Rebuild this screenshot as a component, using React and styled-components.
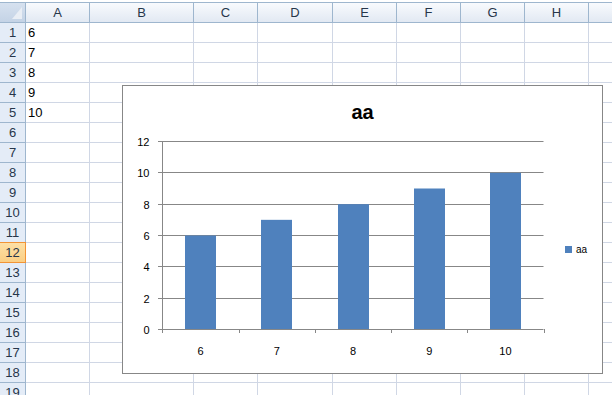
import React from 'react';
import styled, { createGlobalStyle } from 'styled-components';

const GlobalStyle = createGlobalStyle`
  html, body {
    margin: 0;
    padding: 0;
    background: #ffffff;
    overflow: hidden;
  }
  body {
    font-family: "Liberation Sans", Arial, sans-serif;
  }
`;

const COLUMNS = [
  { name: '', width: 26 },
  { name: 'A', width: 64 },
  { name: 'B', width: 104 },
  { name: 'C', width: 64 },
  { name: 'D', width: 75 },
  { name: 'E', width: 64 },
  { name: 'F', width: 64 },
  { name: 'G', width: 64 },
  { name: 'H', width: 64 },
  { name: 'I', width: 64 },
];

const VALUES = [6, 7, 8, 9, 10];
const ROW_COUNT = 19;
const SELECTED_ROW = 12;

const Page = styled.div`
  position: relative;
  width: 612px;
  height: 395px;
  padding-top: 2px;
  box-sizing: border-box;
  overflow: hidden;
`;

const Sheet = styled.div`
  display: grid;
  grid-template-columns: ${(p) => p.$columns};
  grid-auto-rows: 20px;
  border-top: 1px solid #9eb6ce;
  font-size: 13px;
  line-height: 19px;
`;

const Corner = styled.div`
  position: relative;
  box-sizing: border-box;
  background: linear-gradient(#d6e1ef, #c4d3e6);
  border-right: 1px solid #9eb6ce;
  border-bottom: 1px solid #9eb6ce;

  &::after {
    content: '';
    position: absolute;
    right: 3px;
    bottom: 3px;
    width: 10px;
    height: 12px;
    background: #e9eef5;
    clip-path: polygon(100% 0, 100% 100%, 0 100%);
  }
`;

const ColHeader = styled.div`
  box-sizing: border-box;
  background: linear-gradient(#f8fafd, #e2e9f3);
  border-right: 1px solid #9eb6ce;
  border-bottom: 1px solid #9eb6ce;
  text-align: center;
  color: #27364a;
`;

const RowHeader = styled.div`
  box-sizing: border-box;
  background: ${(p) => (p.$selected ? 'linear-gradient(#fde0a6, #fbcf84)' : '#e4ecf7')};
  border-right: 1px solid ${(p) => (p.$selected ? '#f29436' : '#9eb6ce')};
  border-bottom: 1px solid ${(p) => (p.$selected ? '#f29436' : '#9eb6ce')};
  box-shadow: ${(p) => (p.$selected ? '0 -1px 0 #f29436' : 'none')};
  text-align: center;
  color: #27364a;
`;

const Cell = styled.div`
  box-sizing: border-box;
  border-right: 1px solid #d0d7e5;
  border-bottom: 1px solid #d0d7e5;
  padding-left: 2px;
  color: #000000;
  white-space: nowrap;
  overflow: hidden;
`;

const ChartFrame = styled.div`
  position: absolute;
  left: 122px;
  top: 85px;
  width: 481px;
  height: 289px;
  box-sizing: border-box;
  border: 1px solid #878787;
  background: #ffffff;
  display: grid;
  grid-template-rows: 40px 1fr;
`;

const ChartTitle = styled.div`
  padding-top: 14px;
  text-align: center;
  font-weight: bold;
  font-size: 20px;
  line-height: 24px;
  color: #000000;
`;

const ChartBody = styled.div`
  display: flex;
  align-items: center;
`;

const Legend = styled.div`
  display: flex;
  align-items: center;
  gap: 4px;
  padding-left: 8px;
  font-size: 10px;
  line-height: 12px;
`;

const Swatch = styled.span`
  width: 7px;
  height: 7px;
  background: ${(p) => p.$color};
`;

const BAR_COLOR = '#4f81bd';
const AXIS_COLOR = '#878787';

function Plot() {
  const left = 162.5;
  const right = 543.5;
  const zeroY = 329.5;
  const step = 188 / 12;
  const catWidth = (right - left) / VALUES.length;
  const yFor = (v) => Math.round(zeroY - v * step - 0.5) + 0.5;
  const ticks = [0, 2, 4, 6, 8, 10, 12];

  return (
    <svg width="434" height="247" viewBox="123 126 434 247">
      {ticks.map((t) => (
        <g key={t}>
          <line x1={158} x2={right} y1={yFor(t)} y2={yFor(t)} stroke={AXIS_COLOR} strokeWidth="1" />
          <text
            x={149.5}
            y={yFor(t) + 4}
            textAnchor="end"
            fontSize="11"
            fontFamily="Liberation Sans, Arial, sans-serif"
            fill="#000"
          >
            {t}
          </text>
        </g>
      ))}
      {VALUES.map((v, i) => {
        const cx = left + catWidth * (i + 0.5);
        const top = zeroY - v * step;
        return (
          <rect key={v} x={Math.round(cx - 15.5)} y={top} width={31} height={329 - top} fill={BAR_COLOR} />
        );
      })}
      <line x1={left} x2={left} y1={141} y2={333} stroke={AXIS_COLOR} strokeWidth="1" />
      {VALUES.map((v, i) => (
        <line
          key={`t${v}`}
          x1={Math.round(left + catWidth * (i + 1)) + 0.5}
          x2={Math.round(left + catWidth * (i + 1)) + 0.5}
          y1={329}
          y2={333}
          stroke={AXIS_COLOR}
          strokeWidth="1"
        />
      ))}
      {VALUES.map((v, i) => (
        <text
          key={`l${v}`}
          x={left + catWidth * (i + 0.5)}
          y={355}
          textAnchor="middle"
          fontSize="11"
          fontFamily="Liberation Sans, Arial, sans-serif"
          fill="#000"
        >
          {v}
        </text>
      ))}
    </svg>
  );
}

export default function App() {
  const rows = Array.from({ length: ROW_COUNT }, (_, i) => i + 1);
  const columns = COLUMNS.map((c) => `${c.width}px`).join(' ');

  return (
    <Page>
      <GlobalStyle />
      <Sheet $columns={columns}>
        <Corner />
        {COLUMNS.slice(1).map((c) => (
          <ColHeader key={c.name}>{c.name}</ColHeader>
        ))}
        {rows.map((r) => (
          <React.Fragment key={r}>
            <RowHeader $selected={r === SELECTED_ROW}>{r}</RowHeader>
            {COLUMNS.slice(1).map((c, ci) => (
              <Cell key={c.name}>{ci === 0 && VALUES[r - 1] !== undefined ? VALUES[r - 1] : ''}</Cell>
            ))}
          </React.Fragment>
        ))}
      </Sheet>
      <ChartFrame>
        <ChartTitle>aa</ChartTitle>
        <ChartBody>
          <Plot />
          <Legend>
            <Swatch $color={BAR_COLOR} />
            aa
          </Legend>
        </ChartBody>
      </ChartFrame>
    </Page>
  );
}
